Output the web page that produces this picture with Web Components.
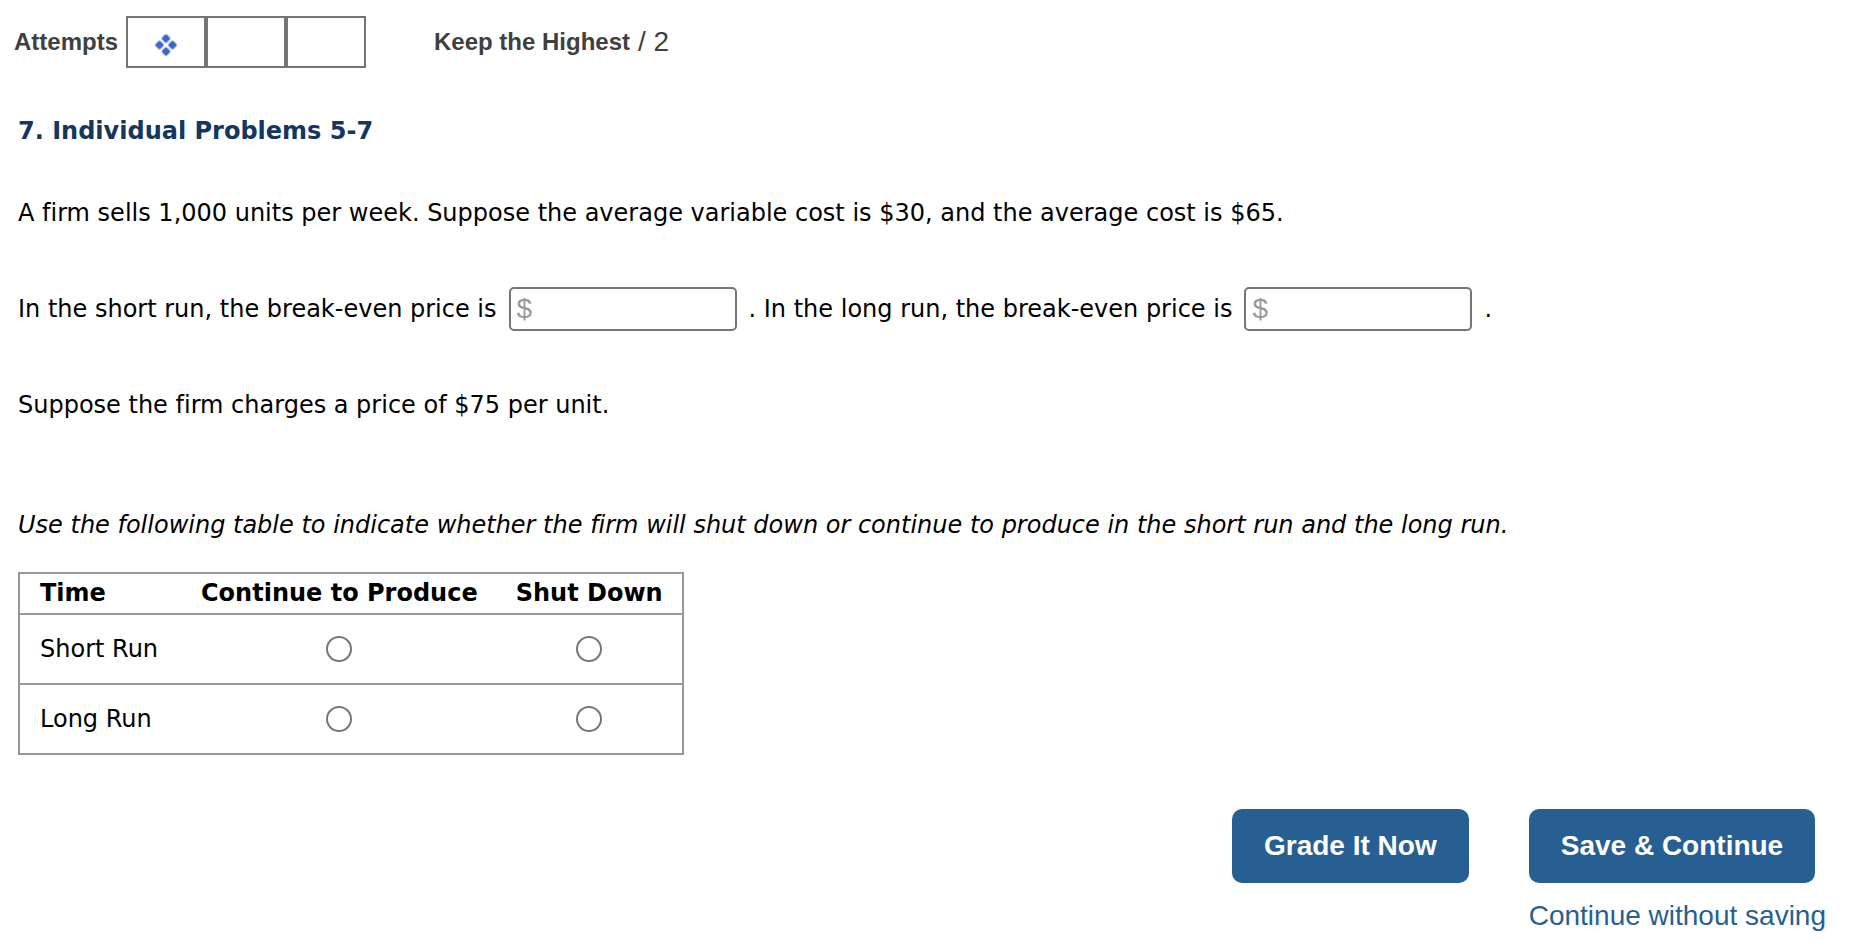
<!DOCTYPE html>
<html lang="en">
<head>
<meta charset="utf-8">
<title>Individual Problems 5-7</title>
<style>
  body {
    margin: 0;
    background: #fff;
    color: #000;
    font: 24px/36px Verdana, "DejaVu Sans", sans-serif;
    font-variant-ligatures: none;
  }
</style>
</head>
<body>
<problem-page></problem-page>

<script>
class AttemptsBar extends HTMLElement {
    constructor() {
        super();
        this.attachShadow({mode: 'open'});
    }

    connectedCallback() {
        const total = Number(this.getAttribute('total')) || 3;
        const points = this.getAttribute('points') || '0';
        const icon = `
          <svg width="24" height="24" viewBox="0 0 24 24" role="img" aria-label="Current attempt">
            <g fill="#3d66c9" stroke="#a9bbe8" stroke-width="1">
              <rect x="8.5" y="2" width="7" height="7" rx="2" transform="rotate(45 12 5.5)"/>
              <rect x="2" y="8.5" width="7" height="7" rx="2" transform="rotate(45 5.5 12)"/>
              <rect x="15" y="8.5" width="7" height="7" rx="2" transform="rotate(45 18.5 12)"/>
              <rect x="8.5" y="15" width="7" height="7" rx="2" transform="rotate(45 12 18.5)"/>
            </g>
          </svg>`;
        const boxes = Array.from({length: total}, (_, i) => `<span class="box">${i === 0 ? icon : ''}</span>`).join('');

        this.shadowRoot.innerHTML = `
          <style>
            :host {
              display: flex;
              align-items: center;
              font: 24px/52px Helvetica, "Liberation Sans", sans-serif;
              color: #404040;
            }
            .boxes {
              display: flex;
              margin: 0 68px 0 8px;
            }
            .box {
              display: flex;
              align-items: center;
              justify-content: center;
              width: 80px;
              height: 52px;
              padding-top: 6px;
              box-sizing: border-box;
              border: 2px solid #757575;
            }
            .points {
              font-size: 28px;
              margin-left: 8px;
            }
          </style>
          <strong>Attempts</strong>
          <div class="boxes">${boxes}</div>
          <strong>Keep the Highest</strong>
          <span class="points">/ ${points}</span>
        `;
    }
}

class PriceInput extends HTMLElement {
    constructor() {
        super();
        this.attachShadow({mode: 'open'});
    }

    connectedCallback() {
        this.shadowRoot.innerHTML = `
          <style>
            :host {
              display: inline-block;
            }
            input {
              display: block;
              width: 228px;
              height: 44px;
              padding: 0 6px;
              box-sizing: border-box;
              border: 2px solid #767676;
              border-radius: 5px;
              background: #fff;
              font: 28px/40px Helvetica, "Liberation Sans", sans-serif;
            }
            input::placeholder {
              color: #999;
              opacity: 1;
            }
          </style>
          <input type="text" placeholder="$" aria-label="${this.getAttribute('label') || ''}">
        `;
    }
}

class ChoiceTable extends HTMLElement {
    constructor() {
        super();
        this.attachShadow({mode: 'open'});
    }

    connectedCallback() {
        const columns = JSON.parse(this.getAttribute('columns') || '[]');
        const rows = JSON.parse(this.getAttribute('rows') || '[]');

        this.shadowRoot.innerHTML = `
          <style>
            :host {
              display: block;
            }
            table {
              border-collapse: collapse;
              border: 2px solid #999;
            }
            tr {
              border-bottom: 2px solid #999;
            }
            th, td {
              padding: 0 19px;
              text-align: center;
            }
            thead th {
              height: 39px;
              line-height: 39px;
            }
            tbody th, tbody td {
              height: 68px;
            }
            tr > :first-child {
              min-width: 123px;
              padding-left: 20px;
              text-align: left;
            }
            tbody th {
              font-weight: normal;
            }
            input {
              display: block;
              appearance: none;
              width: 26px;
              height: 26px;
              margin: 0 auto;
              border: 2px solid #767676;
              border-radius: 50%;
              background: #fff;
            }
            input:checked {
              background: #285f92;
              box-shadow: inset 0 0 0 4px #fff;
            }
          </style>
          <table>
            <thead>
              <tr>
                <th scope="col">Time</th>
                ${columns.map(column => `<th scope="col">${column}</th>`).join('')}
              </tr>
            </thead>
            <tbody>
              ${rows.map((row, i) => `
                <tr>
                  <th scope="row">${row}</th>
                  ${columns.map(column => `<td><input type="radio" name="row${i}" aria-label="${row}: ${column}"></td>`).join('')}
                </tr>
              `).join('')}
            </tbody>
          </table>
        `;
    }
}

class ActionButton extends HTMLElement {
    constructor() {
        super();
        this.attachShadow({mode: 'open'});
        this.shadowRoot.innerHTML = `
          <style>
            :host {
              display: block;
            }
            button {
              height: 74px;
              padding: 0 32px;
              border: 0;
              border-radius: 10px;
              background: #285f92;
              color: #fff;
              font: bold 28px/36px Helvetica, "Liberation Sans", sans-serif;
              white-space: nowrap;
              cursor: pointer;
            }
          </style>
          <button type="button"><slot></slot></button>
        `;
    }
}

class ProblemPage extends HTMLElement {
    constructor() {
        super();
        this.attachShadow({mode: 'open'});
    }

    connectedCallback() {
        this.shadowRoot.innerHTML = `
          <style>
            :host {
              display: block;
              padding: 16px 36px 12px 18px;
            }
            attempts-bar {
              margin-left: -4px;
            }
            h1 {
              margin: 45px 0 0;
              font-size: 24px;
              line-height: 36px;
              color: #15365f;
            }
            p {
              margin: 46px 0 0;
            }
            .blanks {
              display: flex;
              flex-wrap: wrap;
              align-items: center;
              gap: 12px;
              padding: 10px 0;
            }
            .instruction {
              margin: 84px 0 29px;
              font-style: italic;
            }
            footer {
              display: flex;
              justify-content: flex-end;
              align-items: flex-start;
              gap: 60px;
              margin-top: 54px;
            }
            .save {
              display: flex;
              flex-direction: column;
              align-items: flex-start;
              gap: 15px;
            }
            a {
              color: #285f92;
              font: 28px/36px Helvetica, "Liberation Sans", sans-serif;
              text-decoration: none;
            }
          </style>
          <attempts-bar total="3" points="2"></attempts-bar>
          <main>
            <h1>7. Individual Problems 5-7</h1>
            <p>A firm sells 1,000 units per week. Suppose the average variable cost is $30, and the average cost is $65.</p>
            <p class="blanks">
              <span>In the short run, the break-even price is</span>
              <price-input label="Short run break-even price"></price-input>
              <span>. In the long run, the break-even price is</span>
              <price-input label="Long run break-even price"></price-input>
              <span>.</span>
            </p>
            <p>Suppose the firm charges a price of $75 per unit.</p>
            <p class="instruction">Use the following table to indicate whether the firm will shut down or continue to produce in the short run and the long run.</p>
            <choice-table columns='["Continue to Produce", "Shut Down"]' rows='["Short Run", "Long Run"]'></choice-table>
          </main>
          <footer>
            <action-button>Grade It Now</action-button>
            <div class="save">
              <action-button>Save &amp; Continue</action-button>
              <a href="#">Continue without saving</a>
            </div>
          </footer>
        `;
    }
}

customElements.define('attempts-bar', AttemptsBar);
customElements.define('price-input', PriceInput);
customElements.define('choice-table', ChoiceTable);
customElements.define('action-button', ActionButton);
customElements.define('problem-page', ProblemPage);
</script>
</body>
</html>
